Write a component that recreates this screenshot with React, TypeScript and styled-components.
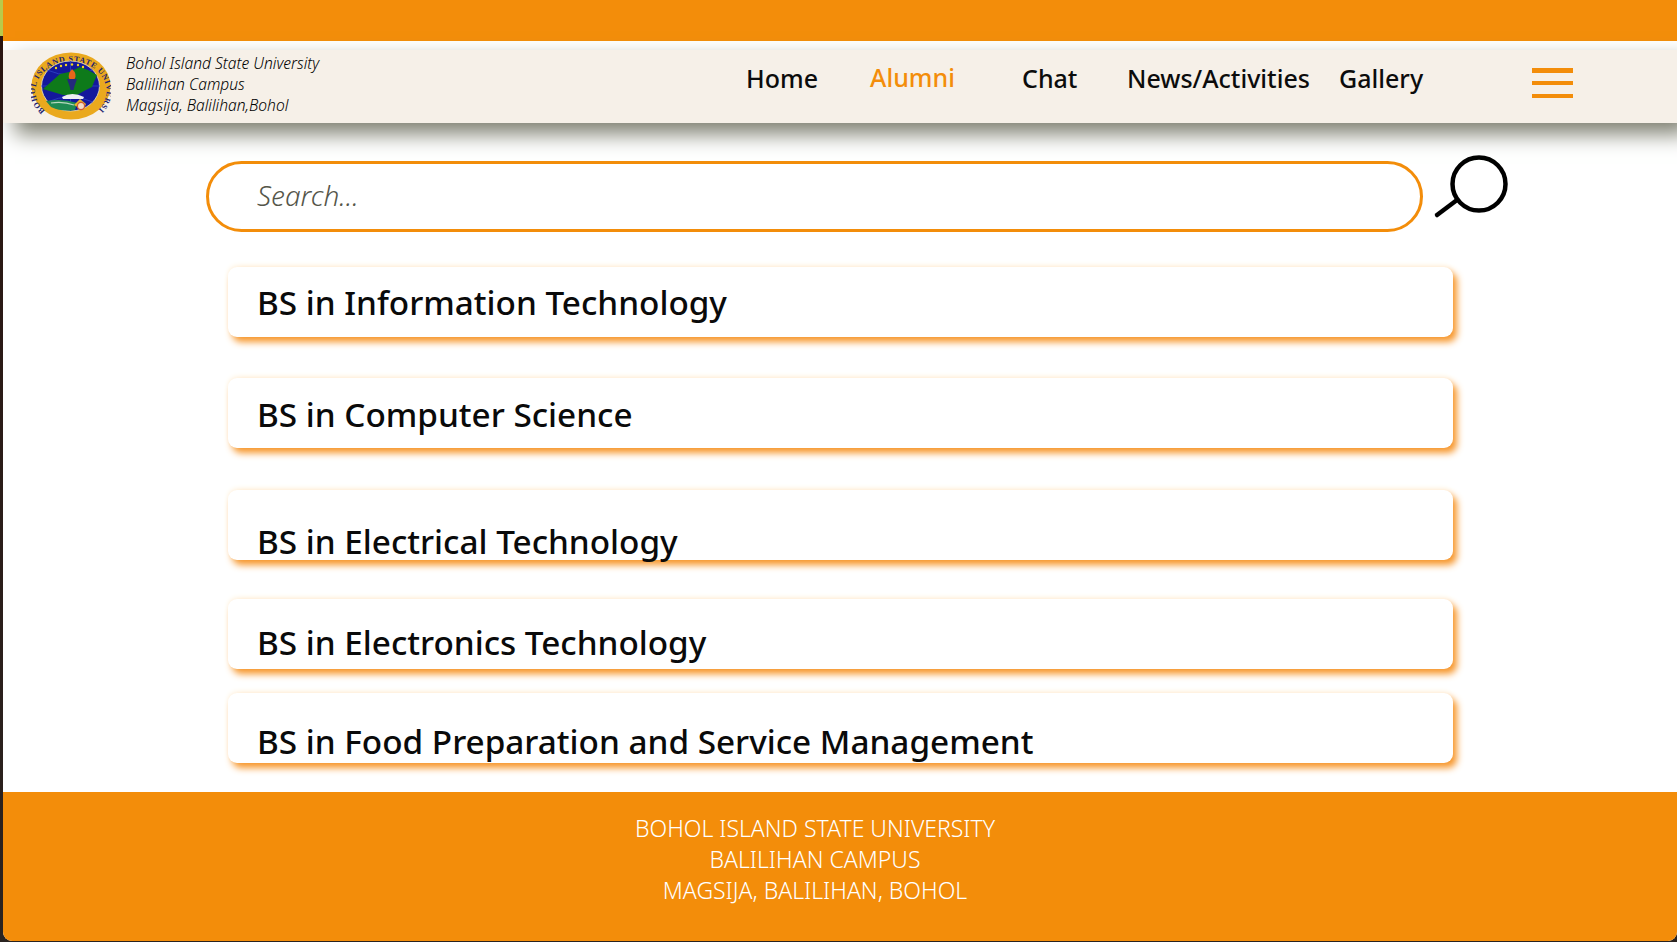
import React from "react";
import styled, { createGlobalStyle } from "styled-components";

const ORANGE = "#f38d0a";

const GlobalStyle = createGlobalStyle`
  html, body { margin: 0; padding: 0; height: 100%; }
  body {
    background: linear-gradient(#b9c94a 0, #b9c94a 36px, #2a1510 36px, #2a2320 100%);
    font-family: "Noto Sans", "Open Sans", sans-serif;
    overflow: hidden;
  }
`;

const Page = styled.div`
  margin-left: 3px;
  height: 941px;
  background: #fff;
  display: flex;
  flex-direction: column;
  border-bottom-left-radius: 9px;
  border-bottom-right-radius: 9px;
  overflow: hidden;
`;

const TopBar = styled.div`
  height: 41px;
  flex: none;
  background: ${ORANGE};
`;

const NavBar = styled.header`
  height: 73px;
  flex: none;
  margin-top: 9px;
  background: #f6f0e8;
  box-shadow: 12px 11px 20px #7f8072;
  display: flex;
  align-items: center;
  position: relative;
`;

const Brand = styled.div`
  display: flex;
  align-items: center;
  width: 743px;
  flex: none;
  padding-left: 28px;
  box-sizing: border-box;
`;

const SealIcon = styled.svg`
  flex: none;
  margin-top: -2px;
`;

const BrandText = styled.div`
  margin: -4px 0 0 15px;
  font-size: 15.6px;
  font-style: italic;
  font-weight: 300;
  line-height: 21px;
  color: #000;
`;

const NavLinks = styled.nav`
  display: flex;
  align-items: center;
  height: 100%;
`;

const NavLink = styled.a<{ $width: number; $active?: boolean }>`
  width: ${(p) => p.$width}px;
  font-size: 25px;
  font-weight: 500;
  line-height: 34px;
  margin-top: ${(p) => (p.$active ? "-19px" : "-17px")};
  white-space: nowrap;
  color: ${(p) => (p.$active ? ORANGE : "#0c0c0c")};
`;

const Hamburger = styled.button`
  width: 41px;
  height: 30px;
  margin-top: -7px;
  padding: 0;
  border: 0;
  background: transparent;
  display: flex;
  flex-direction: column;
  justify-content: space-between;
`;

const HamburgerLine = styled.span`
  display: block;
  height: 4.5px;
  background: ${ORANGE};
`;

const Main = styled.main`
  flex: 1;
  padding: 38px 0 0 203px;
  min-height: 0;
`;

const SearchRow = styled.div`
  display: flex;
  align-items: flex-start;
  height: 71px;
`;

const SearchInput = styled.input`
  width: 1217px;
  height: 71px;
  box-sizing: border-box;
  border: 3px solid ${ORANGE};
  border-radius: 36px;
  padding: 0 48px 3px;
  font-family: inherit;
  font-size: 28px;
  font-style: italic;
  font-weight: 300;
  outline: none;
  background: #fff;
  &::placeholder { color: #55564a; opacity: 1; }
`;

const SearchIcon = styled.svg`
  width: 78px;
  height: 66px;
  margin: -7px 0 0 9px;
  flex: none;
`;

const CourseList = styled.div`
  margin: 35px 0 0 22px;
  width: 1225px;
`;

const Course = styled.div<{ $top: number; $gap: number }>`
  height: 70px;
  box-sizing: border-box;
  margin-bottom: ${(p) => p.$gap}px;
  padding: ${(p) => p.$top}px 0 0 29px;
  background: #fff;
  border-radius: 9px;
  box-shadow: 4px 5px 7px #f7962a, 0 -2px 5px #fff5e6;
  font-size: 33.3px;
  line-height: 46px;
  font-weight: 500;
  color: #0a0a0a;
  white-space: nowrap;
`;

const Footer = styled.footer`
  height: 149px;
  flex: none;
  background: ${ORANGE};
  color: #fff;
  font-size: 23px;
  font-weight: 300;
  line-height: 31px;
  text-align: center;
  padding: 21px 50px 0 0;
  box-sizing: border-box;
`;

const Seal = () => (
  <SealIcon width="80" height="68" viewBox="0 0 80 68">
    <defs>
      <path id="sealRing" d="M14 59 A35.500 29.500 0 1 1 66 59" />
    </defs>
    <ellipse cx="40" cy="34" rx="39.5" ry="33.5" fill="#eaa91e" />
    <text fontFamily="Liberation Serif, serif" fontSize="8" fontWeight="700" fill="#1b2070">
      <textPath href="#sealRing" textLength="158" lengthAdjust="spacing">BOHOL ISLAND STATE UNIVERSITY</textPath>
    </text>
    <ellipse cx="39.500" cy="34" rx="29" ry="25" fill="#14189c" stroke="#e6e2c0" strokeWidth="0.8" />
    <path d="M10 34h59M39.500 9v50M16 18q23 10 46 0M16 50q23-10 46 0" stroke="#2f45c6" strokeWidth="0.8" fill="none" />
    <path d="M12 37 L20 30 L29 22 L38 20 L49 15 L57 18 L66 23 L63 30 L61 35 L53 39 L46 43 L32 43 L22 40 Z" fill="#0e7a1a" />
    <path d="M36 27 h10 l-2.500 7 l-1 4 h-3 l-1 -4 z" fill="#24297c" />
    <path d="M41 17 q5.500 5 2.500 10 h-5 q-2.500 -4.500 2.500 -10z" fill="#e8661a" />
    <path d="M31 45 Q41 39 53 45 L52 47 L32 47 Z" fill="#eef0f2" />
    <path d="M15 49 Q32 46 46 51 L44 58 Q30 60 20 55 Z" fill="#1f8a52" />
    <path d="M20 51 Q32 49 43 53" stroke="#b8d8c0" strokeWidth="1.2" fill="none" />
    <path d="M43 53 L49 47 L55 52 L52 58 Z" fill="#e9b52a" />
    <circle cx="50" cy="54" r="3.600" fill="#f2dcc6" stroke="#cf5a32" strokeWidth="1.3" />
    <g fill="#f6d520">
      <circle cx="25" cy="16" r="1.2" /><circle cx="30" cy="14" r="1.2" /><circle cx="35" cy="13" r="1.2" />
      <circle cx="41" cy="12.500" r="1.2" /><circle cx="47" cy="13" r="1.2" /><circle cx="52" cy="15" r="1.2" />
    </g>
  </SealIcon>
);

const courses = [
  { name: "BS in Information Technology", top: 12, gap: 41 },
  { name: "BS in Computer Science", top: 13, gap: 42 },
  { name: "BS in Electrical Technology", top: 28, gap: 39 },
  { name: "BS in Electronics Technology", top: 20, gap: 24 },
  { name: "BS in Food Preparation and Service Management", top: 25, gap: 0 },
];

const links = [
  { label: "Home", width: 124 },
  { label: "Alumni", width: 152, active: true },
  { label: "Chat", width: 105 },
  { label: "News/Activities", width: 212 },
  { label: "Gallery", width: 193 },
];

const App = () => (
  <Page>
    <GlobalStyle />
    <TopBar />
    <NavBar>
      <Brand>
        <Seal />
        <BrandText>
          Bohol Island State University
          <br />
          Balilihan Campus
          <br />
          Magsija, Balilihan,Bohol
        </BrandText>
      </Brand>
      <NavLinks>
        {links.map((l) => (
          <NavLink key={l.label} $width={l.width} $active={l.active}>
            {l.label}
          </NavLink>
        ))}
        <Hamburger aria-label="menu">
          <HamburgerLine />
          <HamburgerLine />
          <HamburgerLine />
        </Hamburger>
      </NavLinks>
    </NavBar>
    <Main>
      <SearchRow>
        <SearchInput placeholder="Search..." />
        <SearchIcon viewBox="0 0 78 66">
          <circle cx="47" cy="30" r="26.500" fill="none" stroke="#000" strokeWidth="4.5" />
          <path d="M5 61 L25 46" stroke="#000" strokeWidth="4.5" strokeLinecap="round" />
        </SearchIcon>
      </SearchRow>
      <CourseList>
        {courses.map((c) => (
          <Course key={c.name} $top={c.top} $gap={c.gap}>
            {c.name}
          </Course>
        ))}
      </CourseList>
    </Main>
    <Footer>
      BOHOL ISLAND STATE UNIVERSITY
      <br />
      BALILIHAN CAMPUS
      <br />
      MAGSIJA, BALILIHAN, BOHOL
    </Footer>
  </Page>
);

export default App;
